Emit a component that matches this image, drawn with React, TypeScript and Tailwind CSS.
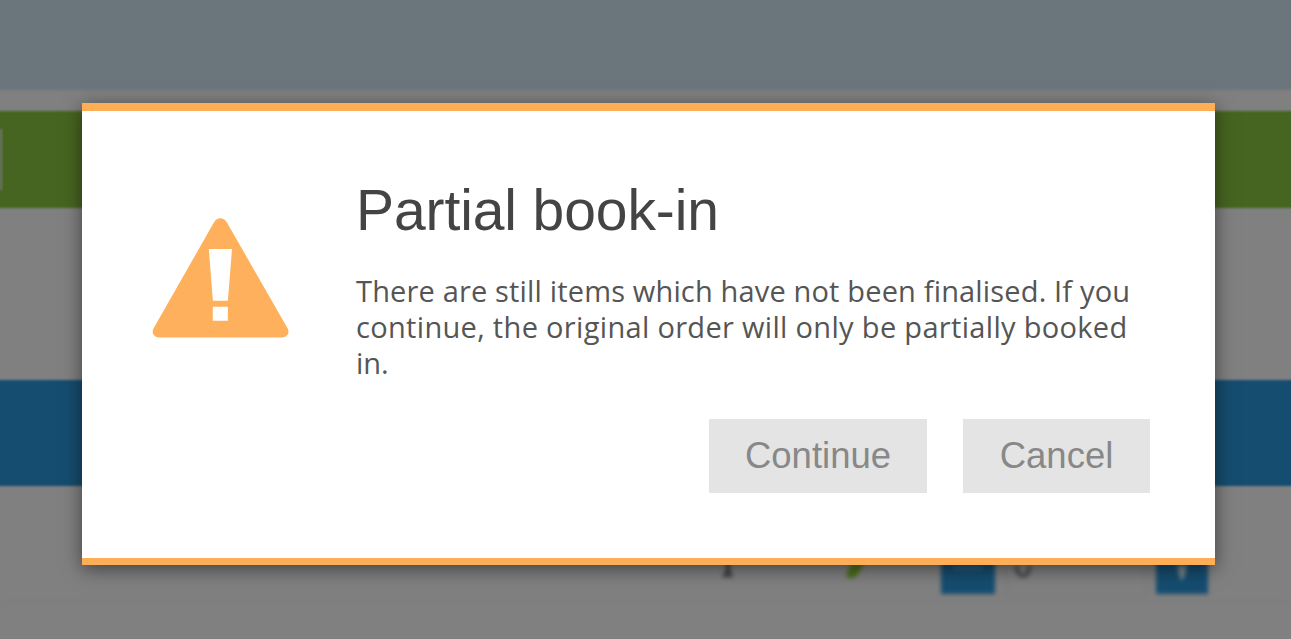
import clsx from 'clsx';

interface Action { id: string; label: string; }

const actions: Action[] = [
  { id: 'continue', label: 'Continue' },
  { id: 'cancel', label: 'Cancel' },
];

function WarningIcon() {
  return (
    <svg width="137" height="120" viewBox="0 0 137 120" className="shrink-0" aria-hidden="true">
      <path
        fill="#ffb05c"
        d="M62 4.3Q64.5.3 68.3.3T74.8 4.3L135.7 110.5Q137.3 114 135.5 116.8 133.7 119.4 130 119.4H7Q3.2 119.4 1.5 116.8-.2 114 1.5 110.5Z"
      />
      <path fill="#fff" d="M56.8 31H80L75.9 82.7H60.9ZM60.8 88.7H75.8V102.7H60.8Z" />
    </svg>
  );
}

// Order page that sits behind the dimmed overlay
function Backdrop() {
  return (
    <div className="h-full w-full">
      <div className="-mx-2 -mt-2 h-[98px] bg-[#6b767c] blur-[1.5px]" />
      <div className="-mx-2 mt-[21px] flex h-[97px] items-center bg-[#466520] px-2 blur-[1.2px]">
        <div className="h-[61px] w-[2px] bg-[#777]" />
      </div>
      <div className="-mx-2 mt-[172px] h-[106px] bg-[#154d70] blur-[1.2px]" />
      <div className="flex h-[116px] items-start border-b border-[#7c7c7c] pt-[59px] pl-[718px] blur-[2px]">
        <svg width="20" height="40" viewBox="0 0 20 40" aria-hidden="true">
          <path fill="#3d3d44" d="M8 12H12V24L15 32H4L8 25Z" />
        </svg>
        <svg width="24" height="40" viewBox="0 0 24 40" className="ml-[106px]" aria-hidden="true">
          <path fill="#4b6f1c" d="M8 18H21L11 33H3V27Z" />
        </svg>
        <div className="ml-[73px] flex h-[49px] w-[54px] justify-center bg-[#154d70] pt-[22px]">
          <div className="h-[2px] w-7 bg-[#4a6c82]" />
        </div>
        <div className="ml-[11px] flex h-[56px] w-[141px] border border-[#777] pl-1">
          <svg width="20" height="40" viewBox="0 0 20 40" aria-hidden="true">
            <path fill="none" stroke="#4c4c4c" strokeWidth="4" d="M5 20Q7 30 12 30T19 20" />
          </svg>
        </div>
        <div className="ml-[9px] flex h-[49px] w-[52px] justify-center bg-[#154d70]">
          <svg width="20" height="40" viewBox="0 0 20 40" aria-hidden="true">
            <path fill="#76868f" d="M5 20H15L13 30 10 36 7 30Z" />
          </svg>
        </div>
      </div>
    </div>
  );
}

export default function App() {
  return (
    <div className="relative flow-root h-[639px] w-[1291px] overflow-hidden bg-[#808080] font-['Liberation_Sans',sans-serif]">
      <Backdrop />
      <div className="absolute inset-0 flex justify-center pt-[103px] pr-[76px] pl-[82px]">
        <div
          role="dialog"
          className="flex h-[462px] w-[1133px] border-y-8 border-b-[7px] border-[#ffae58] bg-white pt-[68px] pr-[65px] pl-[70px] shadow-[0_4px_18px_rgba(0,0,0,0.5)]"
        >
          <div className="mt-[39px]"><WarningIcon /></div>
          <div className="ml-[67px] flex-1">
            <h1 className="-mt-px text-[57px] leading-[64px] tracking-[-0.1px] text-[#444]">Partial book-in</h1>
            <p className="mt-[31px] font-['Open_Sans',sans-serif] text-[29px] leading-[36px] whitespace-nowrap text-[#555]">
              <span className="block tracking-[0.16px]">There are still items which have not been finalised. If you</span>
              <span className="block tracking-[0.32px]">continue, the original order will only be partially booked</span>
              <span className="block">in.</span>
            </p>
            <div className="mt-[38px] flex justify-end gap-9">
              {actions.map(a => (
                <button
                  key={a.id}
                  className={clsx(
                    'h-[74px] bg-[#e4e4e4] text-[36.5px] leading-[72px] text-[#888]',
                    a.id === 'continue' ? 'w-[218px]' : 'w-[187px]',
                  )}
                >
                  {a.label}
                </button>
              ))}
            </div>
          </div>
        </div>
      </div>
    </div>
  );
}
